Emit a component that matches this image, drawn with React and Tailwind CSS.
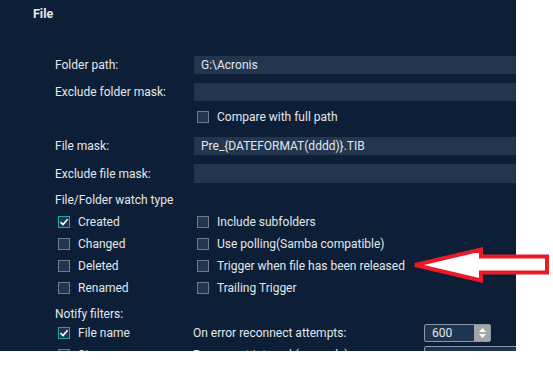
import React from "react";

const Check = ({ checked }) =>
  checked ? (
    <span className="w-[12px] h-[12px] border border-[#1aa99b] bg-[#1c3550] flex items-center justify-center shrink-0">
      <svg width="10" height="10" viewBox="0 0 10 10">
        <path d="M1.5 5.2 L4 7.6 L8.6 2.2" fill="none" stroke="#ffffff" strokeWidth="1.6" />
      </svg>
    </span>
  ) : (
    <span className="w-[12px] h-[12px] border border-[#6e7b8b] bg-[#22364f] shrink-0" />
  );

const CheckItem = ({ label, checked }) => (
  <div className="flex items-center gap-[8px] whitespace-nowrap">
    <Check checked={checked} />
    <span>{label}</span>
  </div>
);

const Field = ({ label, value, className = "" }) => (
  <div className={`flex items-center ${className}`}>
    <span className="w-[139px] shrink-0">{label}</span>
    <div className="flex-1 h-[18px] bg-[#22364f] flex items-center px-[7px]">{value}</div>
  </div>
);

const Spin = ({ value }) => (
  <div className="w-[67px] h-[18px] shrink-0 border border-[#8c97a4] rounded-[2px] bg-[#1f3450] flex">
    <span className="flex-1 pl-[7px] leading-[16px]">{value}</span>
    <span className="w-[16px] bg-[#a2a6ab] flex flex-col items-center justify-center gap-[2px]">
      <svg width="7" height="4" viewBox="0 0 7 4"><path d="M0 4 L3.5 0 L7 4Z" fill="#fff" /></svg>
      <svg width="7" height="4" viewBox="0 0 7 4"><path d="M0 0 L3.5 4 L7 0Z" fill="#fff" /></svg>
    </span>
  </div>
);

const watch = [
  ["Created", true, "Include subfolders"],
  ["Changed", false, "Use polling(Samba compatible)"],
  ["Deleted", false, "Trigger when file has been released"],
  ["Renamed", false, "Trailing Trigger"],
];

export default function App() {
  return (
    <div className="relative w-[553px] h-[366px] bg-white overflow-hidden" style={{ fontFamily: "Roboto, 'Noto Sans', sans-serif" }}>
      <div className="w-[516px] h-[351px] bg-[#0d1f36] text-[#e3e7ec] text-[12px] overflow-hidden">
        <div className="pl-[33px] pt-[6px] h-[56px] font-bold text-[12.5px] leading-[16px]">File</div>

        <div className="pl-[55px] flex flex-col">
          <Field label="Folder path:" value="G:\Acronis" />
          <Field label="Exclude folder mask:" value="" className="mt-[9px]" />
          <div className="h-[25px] flex items-center pl-[142px] mt-[3px]">
            <CheckItem label="Compare with full path" />
          </div>
          <Field label="File mask:" value="Pre_{DATEFORMAT(dddd)}.TIB" className="mt-[8px]" />
          <Field label="Exclude file mask:" value="" className="mt-[9px] [&>div]:h-[19px]" />
          <div className="h-[22px] flex items-center mt-[6px]">File/Folder watch type</div>
          <div className="flex flex-col pl-[3px]">
            {watch.map(([a, c, b]) => (
              <div key={a} className="h-[22px] flex items-center">
                <div className="w-[139px]">
                  <CheckItem label={a} checked={c} />
                </div>
                <CheckItem label={b} />
              </div>
            ))}
          </div>
          <div className="h-[21px] flex items-center mt-[4px]">Notify filters:</div>
          <div className="h-[18px] flex items-center pl-[3px]">
            <div className="w-[135px] shrink-0">
              <CheckItem label="File name" checked />
            </div>
            <span className="w-[231px] shrink-0 whitespace-nowrap">On error reconnect attempts:</span>
            <Spin value="600" />
          </div>
          <div className="h-[18px] flex items-center pl-[3px] mt-[4px]">
            <div className="w-[135px] shrink-0">
              <CheckItem label="Size" />
            </div>
            <span className="w-[231px] shrink-0 whitespace-nowrap">Reconnect interval (seconds):</span>
            <div className="w-[100px] h-[18px] shrink-0 border border-[#8c97a4] rounded-[2px] bg-[#1f3450]" />
          </div>
        </div>
      </div>

      <svg className="absolute left-0 top-0" width="553" height="366" viewBox="0 0 553 366">
        <polygon
          points="415,265 481,249.5 481,256.5 547,256.5 547,272.5 481,272.5 481,280.5"
          fill="#ffffff"
          stroke="#e81c28"
          strokeWidth="4"
          strokeLinejoin="miter"
        />
      </svg>
    </div>
  );
}
